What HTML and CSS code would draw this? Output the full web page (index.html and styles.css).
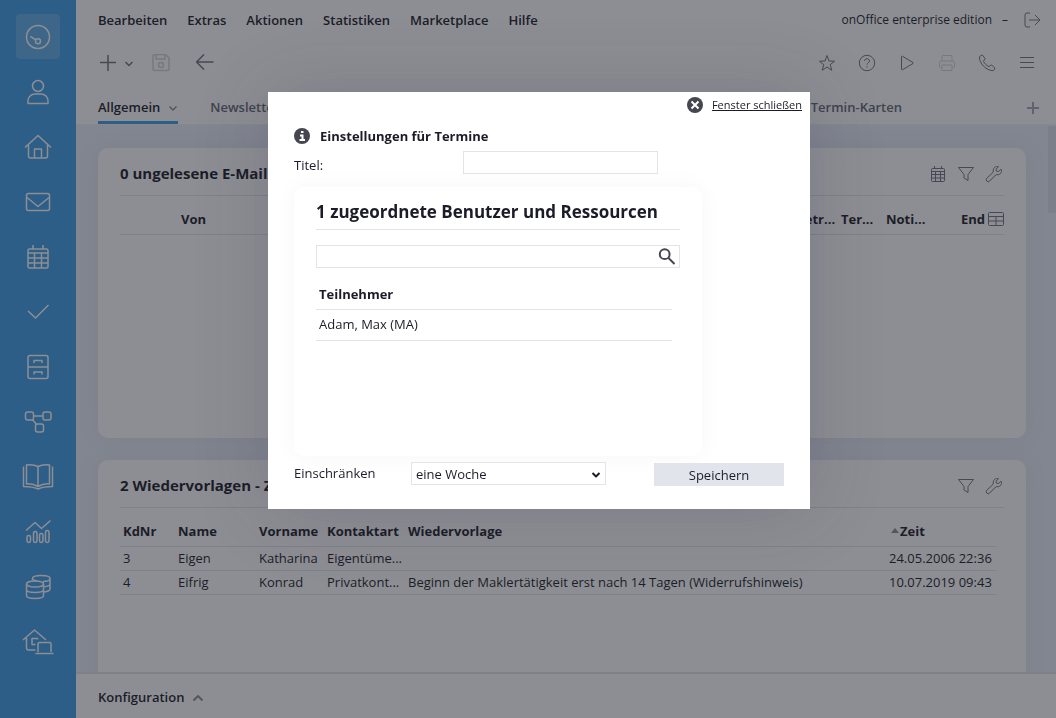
FILE: index.html
```html
<!DOCTYPE html>
<html lang="de">
<head>
<meta charset="utf-8">
<title>onOffice enterprise edition</title>
<link rel="stylesheet" href="styles.css">
</head>
<body>
<svg class="sprite" aria-hidden="true">
  <symbol id="calendar" viewBox="0 0 28 28"><rect x="4" y="6" width="20" height="19" rx="1.5"/><path d="M4 10h20M4 15h20M4 20h20M10.500 10v15M17.500 10v15M9 2v4M19 2v4"/></symbol>
  <symbol id="calendar-small" viewBox="0 0 18 18"><rect x="2.500" y="3.500" width="13" height="13" rx="1"/><path d="M2.500 6.500h13M2.500 9.500h13M2.500 13h13M6.500 6.500v10M11.500 6.500v10M5.500 1v2.500M12.500 1v2.500"/></symbol>
  <symbol id="filter" viewBox="0 0 18 18"><path d="M1.500 2.500h15L11 9.500v6L7 13V9.500z"/></symbol>
  <symbol id="wrench" viewBox="0 0 18 18"><path d="M16 4.200l-2.500 2.300-2-.400-.400-2L13.500 1.700C11 .8 8 2.500 8.300 6L8 7.300 1.800 13.300a1.900 1.900 0 0 0 2.800 2.800L10.700 9.900 12 9.700C15.500 10 17.200 7 16.200 4.300z"/></symbol>
</svg>
<div class="app">
  <nav class="sidebar" aria-label="Module">
    <a class="nav-item active" href="#" aria-label="Dashboard"><svg viewBox="0 0 28 28"><circle cx="14" cy="14" r="11.500"/><circle cx="14" cy="18.300" r="2.500"/><path d="M6.300 13.300l5.700 3.700"/></svg></a>
    <a class="nav-item" href="#" aria-label="Adressen"><svg viewBox="0 0 28 28"><circle cx="14" cy="8" r="5.500"/><path d="M4 25.500v-2.500a7 7 0 0 1 7-7h6a7 7 0 0 1 7 7v2.500z"/></svg></a>
    <a class="nav-item" href="#" aria-label="Immobilien"><svg viewBox="0 0 28 28"><path d="M1 14.500L14 2.500l13 12M4.500 12v11a2 2 0 0 0 2 2h15a2 2 0 0 0 2-2V12M10.500 25v-9h7v9"/></svg></a>
    <a class="nav-item" href="#" aria-label="E-Mail"><svg viewBox="0 0 28 28"><rect x="2.500" y="5.500" width="23" height="17" rx="2"/><path d="M3 9.500l11 9 11-9"/></svg></a>
    <a class="nav-item" href="#" aria-label="Kalender"><svg><use href="#calendar"/></svg></a>
    <a class="nav-item" href="#" aria-label="Aufgaben"><svg viewBox="0 0 28 28"><path d="M4 13l7.500 7L24.500 7"/></svg></a>
    <a class="nav-item" href="#" aria-label="Ablage"><svg viewBox="0 0 28 28"><rect x="4" y="2.500" width="20" height="23" rx="2"/><path d="M4 14h20M10 10V7.500h8V10M10 21.500V19h8v2.500"/></svg></a>
    <a class="nav-item" href="#" aria-label="Prozesse"><svg viewBox="0 0 28 28"><rect x="1.500" y="4" width="8" height="8" rx="2"/><rect x="19" y="4" width="8" height="8" rx="2"/><rect x="11.500" y="16" width="8" height="8" rx="2"/><path d="M9.500 8H19M8.500 11.500l4 5"/></svg></a>
    <a class="nav-item wide" href="#" aria-label="Handbuch"><svg viewBox="0 0 32 28"><path d="M16 3.500C12 1.500 8 1.500 4.500 2v19c4-.5 8 .5 11.500 2.500 3.500-2 7.500-3 11.500-2.500V2C24 1.500 20 1.500 16 3.500zM16 3.500v20M1.500 3.500v20c5 0 10 .500 14.500 2.500 4.500-2 9.500-2.500 14.500-2.500v-20"/></svg></a>
    <a class="nav-item" href="#" aria-label="Statistik"><svg viewBox="0 0 28 28"><path d="M2 12.500L11 4.500l6.500 6L26.500 2.500"/><rect x="3" y="17.500" width="3.500" height="7" rx="1.700"/><rect x="9.500" y="13.500" width="3.500" height="11" rx="1.700"/><rect x="15.500" y="15.500" width="3.500" height="9" rx="1.700"/><rect x="21.500" y="12.500" width="3.500" height="12" rx="1.700"/></svg></a>
    <a class="nav-item" href="#" aria-label="Finanzen"><svg viewBox="0 0 28 28"><ellipse cx="11" cy="11" rx="8.500" ry="3"/><path d="M2.500 11v11.500c0 4 17 4 17 0V11M2.500 16.500c0 4 17 4 17 0M8.500 7V5.500c0-4 17.500-4 17.500 0V16c0 1.500-2 2.500-6 3M8.500 5.500c0 1 2 2 4.500 2.500M26 5.500c0 2-3 3-7 3M26 11c0 1.500-3 2.500-6 2.700"/></svg></a>
    <a class="nav-item wide" href="#" aria-label="Portal"><svg viewBox="0 0 32 28"><path d="M1 12L12.500 2 24 12M4.500 10v10a2 2 0 0 0 2 2h7M15.500 11.500v-1H10v6h3.500M16 24v-8a1.500 1.500 0 0 1 1.500-1.500h10a1.500 1.500 0 0 1 1.500 1.500v8M13.500 25.500h18"/></svg></a>
  </nav>

  <div class="main">
    <header class="header">
      <div class="menubar">
        <nav class="menu">
          <a href="#">Bearbeiten</a><a href="#">Extras</a><a href="#">Aktionen</a><a href="#">Statistiken</a><a href="#">Marketplace</a><a href="#">Hilfe</a>
        </nav>
        <div class="account"><span>onOffice enterprise edition</span><span>–</span>
          <button class="icon-button" aria-label="Abmelden"><svg viewBox="0 0 18 18"><path d="M7 2H4a2 2 0 0 0-2 2v10a2 2 0 0 0 2 2h3M6 9h11M12 4l5 5-5 5"/></svg></button>
        </div>
      </div>
      <div class="toolbar">
        <div class="tools-left">
          <button class="icon-button" aria-label="Neu"><svg viewBox="0 0 18 18"><path d="M10 1v16M2 8.500h16"/></svg></button>
          <button class="icon-button small" aria-label="Neu-Menü"><svg viewBox="0 0 10 10"><path d="M1.500 3L5 6.500 8.500 3"/></svg></button>
          <button class="icon-button disabled save" aria-label="Speichern" disabled><svg viewBox="0 0 18 18"><path d="M2.500 0.500h11L17 4v11a1.500 1.500 0 0 1-1.500 1.500h-13A1.500 1.500 0 0 1 1 15V2A1.500 1.500 0 0 1 2.500 .5zM4 .5V5h9V.5"/><circle cx="9" cy="11" r="2.500"/></svg></button>
          <button class="icon-button back" aria-label="Zurück"><svg viewBox="0 0 18 18"><path d="M17.500 8H.5M8 .5L.5 8 8 15.500"/></svg></button>
        </div>
        <div class="tools-right">
          <button class="icon-button" aria-label="Favoriten"><svg viewBox="0 0 18 18"><path d="M9 1.500l2 5.500 5.500.2-4.300 3.500 1.600 5.600L9 13l-4.800 3.300 1.600-5.600L1.500 7.200 7 7z"/></svg></button>
          <button class="icon-button" aria-label="Hilfe"><svg viewBox="0 0 18 18"><circle cx="9" cy="9" r="7.700"/><path d="M6.500 7c0-3 5-3 5 0 0 1.700-2.500 1.700-2.500 3.700M9 12v1.500"/></svg></button>
          <button class="icon-button" aria-label="Starten"><svg viewBox="0 0 18 18"><path d="M3.500 2.800v12.400a.6.600 0 0 0 1 .500L15 9.500a.6.600 0 0 0 0-1L4.500 2.300a.6.600 0 0 0-1 .500z"/></svg></button>
          <button class="icon-button disabled" aria-label="Drucken" disabled><svg viewBox="0 0 18 18"><path d="M4 7V2.500A1 1 0 0 1 5 1.500h8a1 1 0 0 1 1 1V7M3.500 13.500h-1a1 1 0 0 1-1-1V9a2 2 0 0 1 2-2h11a2 2 0 0 1 2 2v3.500a1 1 0 0 1-1 1h-1M4 11h10v5.500H4z"/></svg></button>
          <button class="icon-button" aria-label="Anrufen"><svg viewBox="0 0 18 18"><path d="M3 1.300L1.500 3C1 9 8 16.500 15 16.700l1.700-1.500v-1.500L13.500 11l-2.700 1.500C9 12 6 9 5.500 7.200L7.200 4.700 4.700 1.300z"/></svg></button>
          <button class="icon-button" aria-label="Menü"><svg viewBox="0 0 18 18"><path d="M2 3.500h14M2 8.500h14M2 13.500h14"/></svg></button>
        </div>
      </div>
      <nav class="tabs">
        <div class="tab-list">
          <a class="tab selected" href="#">Allgemein <svg viewBox="0 0 10 10"><path d="M1.500 3.500L5 7l3.500-3.500"/></svg></a>
          <a class="tab" href="#">Newsletter</a>
          <a class="tab last" href="#">Termin-Karten</a>
        </div>
        <button class="icon-button add" aria-label="Reiter hinzufügen"><svg viewBox="0 0 14 14"><path d="M7 1v12M1 7h12"/></svg></button>
      </nav>
    </header>

    <main class="content">
      <div class="cards">
        <section class="card">
          <header class="card-head">
            <h2>0 ungelesene E-Mails</h2>
            <div class="card-tools">
              <button class="icon-button" aria-label="Kalender"><svg><use href="#calendar-small"/></svg></button>
              <button class="icon-button" aria-label="Filter"><svg><use href="#filter"/></svg></button>
              <button class="icon-button" aria-label="Einstellungen"><svg><use href="#wrench"/></svg></button>
            </div>
          </header>
          <table class="data">
            <colgroup><col class="w58"><col><col class="w45"><col class="w45"><col class="w75"><col class="w28"><col class="w18"></colgroup>
            <thead><tr><th></th><th>Von</th><th>Betr...</th><th>Ter...</th><th>Noti...</th><th>End</th><th class="flush"><button class="icon-button" aria-label="Spalten"><svg viewBox="0 0 18 18"><rect x="2.500" y="2.500" width="15" height="13" rx="1"/><path d="M2.500 6.500h15M2.500 11h15M10 6.500v9"/></svg></button></th></tr></thead>
          </table>
        </section>
        <section class="card">
          <header class="card-head">
            <h2>2 Wiedervorlagen - Zeit</h2>
            <div class="card-tools">
              <button class="icon-button" aria-label="Filter"><svg><use href="#filter"/></svg></button>
              <button class="icon-button" aria-label="Einstellungen"><svg><use href="#wrench"/></svg></button>
            </div>
          </header>
          <div class="table-wrap">
            <table class="data">
              <colgroup><col class="w55"><col class="w81"><col class="w68"><col class="w81"><col><col class="w110"></colgroup>
              <thead><tr><th>KdNr</th><th>Name</th><th>Vorname</th><th>Kontaktart</th><th>Wiedervorlage</th><th><span class="sort"></span>Zeit</th></tr></thead>
              <tbody>
                <tr><td>3</td><td>Eigen</td><td>Katharina</td><td>Eigentüme...</td><td></td><td>24.05.2006 22:36</td></tr>
                <tr><td>4</td><td>Eifrig</td><td>Konrad</td><td>Privatkont...</td><td>Beginn der Maklertätigkeit erst nach 14 Tagen (Widerrufshinweis)</td><td>10.07.2019 09:43</td></tr>
              </tbody>
            </table>
          </div>
        </section>
      </div>
      <div class="scroll-track"><div class="scroll-thumb"></div></div>
    </main>

    <footer class="footer"><button class="config">Konfiguration <svg viewBox="0 0 12 12"><path d="M1.500 9.500L6 5l4.500 4.500"/></svg></button></footer>
  </div>
</div>

<div class="overlay">
  <form class="dialog" role="dialog" aria-labelledby="dialog-title">
    <a class="close" href="#"><svg viewBox="0 0 16 16"><circle cx="8" cy="8" r="8"/><path d="M4.500 4.500l7 7M11.500 4.500l-7 7"/></svg><span>Fenster schließen</span></a>
    <div class="dialog-body">
      <h1 id="dialog-title" class="dialog-title"><svg viewBox="0 0 16 16"><circle cx="8" cy="8" r="8"/><path d="M7 4h2.500M6 7.500h2.500V12M5.500 12h5.500"/></svg>Einstellungen für Termine</h1>
      <div class="title-row"><label for="titel">Titel:</label><input class="field" id="titel" type="text"></div>
      <section class="panel">
        <h2>1 zugeordnete Benutzer und Ressourcen</h2>
        <div class="search field"><input type="text" aria-label="Benutzer suchen"><button type="button" aria-label="Suchen"><svg viewBox="0 0 18 18"><circle cx="6.700" cy="6.200" r="4.900"/><path d="M10.500 10l6 6"/></svg></button></div>
        <table class="people"><thead><tr><th>Teilnehmer</th></tr></thead><tbody><tr><td>Adam, Max (MA)</td></tr></tbody></table>
      </section>
      <div class="limit-row">
        <label for="limit">Einschränken</label>
        <div class="select-wrap"><select class="field" id="limit"><option>eine Woche</option></select><svg viewBox="0 0 10 10"><path d="M1.500 3L5 6.500 8.500 3"/></svg></div>
        <button class="submit" type="button">Speichern</button>
      </div>
    </div>
  </form>
</div>
</body>
</html>
```

FILE: styles.css
```css
* { box-sizing: border-box; }
body { margin: 0; font: 13px/18px "Open Sans", sans-serif; color: #1b1c28; }
h1, h2 { margin: 0; }
a { color: inherit; text-decoration: none; }
button, input, select { font: inherit; color: inherit; margin: 0; }
button { border: 0; padding: 0; background: none; }
svg { display: block; fill: none; stroke: currentColor; stroke-linejoin: round; flex: none; }
.sprite { position: absolute; width: 0; height: 0; }

.app { display: flex; height: 100vh; }
.sidebar { width: 76px; flex: none; background: #3d9ee7; display: flex; flex-direction: column; align-items: center; gap: 10px; padding-top: 14px; color: #fff; overflow: hidden; }
.nav-item { flex: none; width: 44px; height: 45px; border-radius: 4px; display: flex; align-items: center; justify-content: center; }
.nav-item.active { background: #5eaeea; }
.nav-item svg { width: 28px; height: 28px; stroke-width: 1.5; }
.nav-item.wide svg { width: 32px; }

.main { flex: 1; min-width: 0; display: flex; flex-direction: column; background: #fff; }
.header { flex: none; border-bottom: 1px solid #f0f2f5; }
.menubar { height: 40px; padding: 0 15px 0 22px; display: flex; align-items: center; justify-content: space-between; }
.menu { display: flex; gap: 20px; font-weight: 600; }
.account { display: flex; align-items: center; gap: 10px; font-size: 12px; }
.account .icon-button { margin-left: 5px; }
.icon-button { display: flex; flex: none; color: #70737f; }
.icon-button svg { width: 18px; height: 18px; }
.icon-button.disabled { color: #d0d3da; }
.toolbar { height: 44px; padding: 2px 20px 0 22px; display: flex; align-items: center; justify-content: space-between; }
.tools-left { display: flex; align-items: center; }
.tools-left .icon-button svg { stroke-width: 1.5; }
.small { margin-left: 8px; padding-top: 2px; }
.tools-left .small svg, .tab svg { width: 10px; height: 10px; stroke-width: 1.5; }
.save { margin-left: 18px; }
.back { margin-left: 26px; }
.tools-right { display: flex; gap: 22px; }
.tabs { height: 40px; padding: 0 16px 0 22px; display: flex; align-items: center; justify-content: space-between; font-weight: 600; color: #646875; }
.tab-list { flex: 1; display: flex; gap: 32px; }
.tab { height: 40px; padding-top: 14px; display: flex; gap: 8px; line-height: 18px; }
.tab svg { margin-top: 5px; color: #8a8d98; }
.tab.selected { color: #1b1c28; border-bottom: 3px solid #3d9ee7; }
.tab.last { margin-left: auto; margin-right: 124px; }
.icon-button.add { color: #a5a8b2; padding-top: 7px; }
.add svg { width: 14px; height: 14px; stroke-width: 2; }

.content { flex: 1; min-height: 0; display: flex; background: #e8eef8; }
.cards { flex: 1; min-width: 0; padding: 23px 22px 0; display: flex; flex-direction: column; gap: 22px; overflow: hidden; }
.card { flex: none; height: 290px; padding: 0 22px; border-radius: 10px; background: #fff; box-shadow: 0 0 20px #dce2eb; }
.card-head { height: 48px; padding-top: 3px; border-bottom: 1px solid #e1e4ea; display: flex; align-items: center; justify-content: space-between; margin-bottom: 8px; }
.card h2 { font-size: 15px; line-height: 20px; font-weight: 700; }
.card-tools { display: flex; gap: 10px; padding: 1px 1px 0 0; }
.table-wrap { padding-right: 8px; }
.data { width: 100%; table-layout: fixed; border-collapse: collapse; }
.data th, .data td { padding: 0 0 0 3px; border-bottom: 1px solid #e1e4ea; text-align: left; white-space: nowrap; }
.data th { height: 30px; font-weight: 700; }
.data td { height: 24px; }
.data th.flush { padding: 0; }
.sort { display: inline-block; margin: 0 1px 3px 2px; border: 4px solid transparent; border-top: 0; border-bottom: 5px solid #8a8d98; }
.w18 { width: 18px; } .w28 { width: 28px; } .w45 { width: 45px; } .w55 { width: 55px; }
.w58 { width: 58px; } .w68 { width: 68px; } .w75 { width: 75px; } .w81 { width: 81px; } .w110 { width: 110px; }
.scroll-track { width: 8px; padding-top: 1px; }
.scroll-thumb { height: 87px; background: #d9e0ea; }
.footer { flex: none; height: 46px; border-top: 2px solid #e1e4ea; padding: 1px 22px 0; display: flex; align-items: center; }
.config { display: flex; align-items: center; gap: 8px; font-weight: 600; }
.config svg { width: 12px; height: 12px; color: #8a8d98; stroke-width: 2; }

.overlay { position: fixed; inset: 0; background: rgba(27, 30, 39, .5); padding: 92px 0 0 268px; }
.dialog { width: 542px; padding: 3px 8px 23px 26px; background: #fff; box-shadow: 0 0 70px rgba(50, 40, 80, .2); }
.close { display: flex; align-items: center; justify-content: flex-end; gap: 9px; font-size: 11px; text-decoration: underline; }
.close svg, .dialog-title svg { width: 16px; height: 16px; stroke: #fff; stroke-width: 2; stroke-linejoin: miter; }
.close circle, .dialog-title circle { fill: #45464f; stroke: none; }
.close span { line-height: 20px; }
.dialog-title { display: flex; align-items: center; gap: 10px; margin-top: 12px; height: 18px; font-size: 13px; line-height: 18px; font-weight: 700; }
.title-row { margin-top: 6px; display: grid; grid-template-columns: 169px 195px; align-items: center; }
.title-row label { padding-top: 4px; }
.field { border: 1px solid #e1e4e8; background: #fff; height: 23px; border-radius: 0; outline: 0; width: 100%; }
.panel { width: 408px; height: 269px; margin-top: 13px; padding: 14px 22px 0; border-radius: 10px; background: #fff; box-shadow: 0 0 24px rgba(0, 0, 0, .04); }
.panel h2 { height: 29px; border-bottom: 1px solid #e1e4e8; font-size: 17px; line-height: 22px; }
.search { margin-top: 15px; display: flex; align-items: center; padding-right: 3px; }
.search input { flex: 1; min-width: 0; border: 0; height: 20px; outline: 0; background: none; }
.search svg { width: 18px; height: 18px; color: #45464f; stroke-width: 2; }
.people { width: 356px; margin-top: 11px; border-collapse: collapse; }
.people th, .people td { height: 31px; padding: 0 3px; border-bottom: 1px solid #e1e4e8; text-align: left; }
.people th { height: 30px; }
.people td { padding-bottom: 2px; }
.limit-row { margin-top: 6px; display: grid; grid-template-columns: 117px 195px 1fr; align-items: start; }
.limit-row label { padding-top: 2px; }
.select-wrap { position: relative; }
.select-wrap select { appearance: none; padding: 0 20px 0 4px; display: block; }
.select-wrap svg { position: absolute; right: 5px; top: 8px; width: 10px; height: 10px; stroke-width: 2; pointer-events: none; }
.submit { margin: 1px 0 0 48px; width: 130px; height: 23px; background: #e1e4ea; }
```
